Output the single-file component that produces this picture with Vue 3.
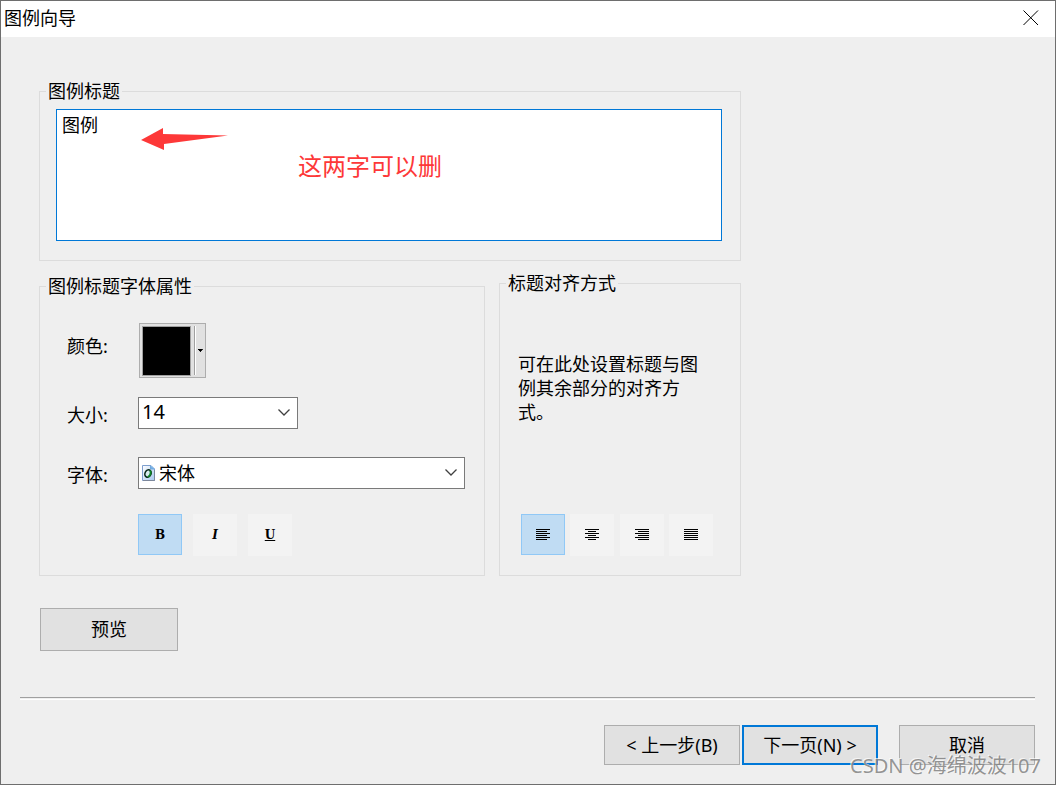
<script setup>
import { ref } from 'vue'

const title = ref('图例')
const size = ref('14')
const font = ref('宋体')
const styles = ref({ B: true, I: false, U: false })
const align = ref('left')
const styleButtons = [
  { key: 'B', label: '粗体' },
  { key: 'I', label: '斜体' },
  { key: 'U', label: '下划线' }
]
const alignments = [
  { key: 'left', label: '左对齐', d: 'M0 .5H14M0 2.5H11M0 4.5H14M0 6.5H11M0 8.5H14M0 10.5H11' },
  { key: 'center', label: '居中', d: 'M0 .5H14M3 2.5H11M0 4.5H14M3 6.5H11M0 8.5H14M3 10.5H11' },
  { key: 'right', label: '右对齐', d: 'M0 .5H14M3 2.5H14M0 4.5H14M3 6.5H14M0 8.5H14M3 10.5H14' },
  { key: 'justify', label: '两端对齐', d: 'M0 .5H14M0 2.5H14M0 4.5H14M0 6.5H14M0 8.5H14M0 10.5H14' }
]
</script>

<template>
  <main class="dialog">
    <header class="titlebar">
      <h1>图例向导</h1>
      <button class="close" type="button" aria-label="关闭">
        <svg width="16" height="16" viewBox="0 0 16 16"><path d="M.5 .5L15 15M15 .5L.5 15" /></svg>
      </button>
    </header>

    <form class="content" @submit.prevent>
      <fieldset class="group title-group">
        <legend>图例标题</legend>
        <div class="title-wrap">
          <textarea v-model="title" aria-label="图例标题" spellcheck="false"></textarea>
          <svg class="arrow" width="88" height="23" viewBox="0 0 88 23"><path d="M0 12L22 0V6L87 7.500L23 16V22Z" /></svg>
          <span class="note">这两字可以删</span>
        </div>
      </fieldset>

      <div class="columns">
        <fieldset class="group font-group">
          <legend>图例标题字体属性</legend>
          <div class="row color-row">
            <label for="color">颜色:</label>
            <button id="color" class="color" type="button">
              <span class="swatch"></span>
              <span class="split"></span>
              <svg width="5" height="3" viewBox="0 0 5 3"><path d="M0 0H5V1H4V2H3V3H2V2H1V1H0Z" /></svg>
            </button>
          </div>
          <div class="row size-row">
            <label for="size">大小:</label>
            <div class="select size">
              <select id="size" v-model="size"><option>14</option></select>
              <svg class="chevron" width="12" height="7" viewBox="0 0 12 7"><path d="M.5 .5L6 6L11.500 .5" /></svg>
            </div>
          </div>
          <div class="row font-row">
            <label for="font">字体:</label>
            <div class="select font">
              <select id="font" v-model="font"><option>宋体</option></select>
              <svg class="font-icon" width="13" height="16" viewBox="0 0 13 16">
                <defs>
                  <linearGradient id="paper" x1="0" y1="0" x2="1" y2="1">
                    <stop offset="0" stop-color="#fff" /><stop offset="1" stop-color="#a9c8ef" />
                  </linearGradient>
                </defs>
                <path d="M.5 .5H9L12.500 4V15.500H.5Z" fill="url(#paper)" stroke="#7e9fce" />
                <path d="M8.500 .5V4H12.500" fill="#72b4e8" stroke="#72a7dd" />
                <path d="M1 15.500H12.500V5" fill="none" stroke="#7c879b" />
                <ellipse cx="6" cy="8.500" rx="3" ry="3.800" transform="rotate(25 6 8.500)" fill="#d8edf0" stroke="#092a18" stroke-width="1.600" />
                <path d="M8 5.500Q9.500 7.500 7.800 10.300L6 12" fill="none" stroke="#11852a" stroke-width="1.800" />
              </svg>
              <svg class="chevron" width="12" height="7" viewBox="0 0 12 7"><path d="M.5 .5L6 6L11.500 .5" /></svg>
            </div>
          </div>
          <div class="style-tools">
            <button
              v-for="b in styleButtons" :key="b.key" type="button" class="tool"
              :class="['glyph-' + b.key, { active: styles[b.key] }]"
              :aria-label="b.label" :aria-pressed="styles[b.key]"
              @click="styles[b.key] = !styles[b.key]"
            >{{ b.key }}</button>
          </div>
        </fieldset>

        <fieldset class="group align-group">
          <legend>标题对齐方式</legend>
          <p>可在此处设置标题与图例其余部分的对齐方式。</p>
          <div class="align-tools">
            <button
              v-for="a in alignments" :key="a.key" type="button" class="tool"
              :class="{ active: align === a.key }" :aria-label="a.label"
              :aria-pressed="align === a.key" @click="align = a.key"
            >
              <svg width="14" height="11" viewBox="0 0 14 11"><path :d="a.d" /></svg>
            </button>
          </div>
        </fieldset>
      </div>

      <button class="btn preview" type="button">预览</button>
    </form>

    <footer>
      <hr />
      <div class="actions">
        <button class="btn" type="button">&lt; 上一步(B)</button>
        <button class="btn primary" type="button">下一页(N) &gt;</button>
        <button class="btn cancel" type="button">取消</button>
      </div>
    </footer>
    <span class="watermark">CSDN @海绵波波107</span>
  </main>
</template>

<style>
body { background: #efefef; }
</style>

<style scoped>
* { box-sizing: border-box; }
.dialog {
  position: relative;
  display: flex;
  flex-direction: column;
  min-height: 100vh;
  border: 1px solid #6e6e6e;
  background: #efefef;
  color: #000;
  font: 18px/24px "Noto Sans", "Noto Sans CJK SC", sans-serif;
}
button, select, textarea { font: inherit; color: inherit; margin: 0; border-radius: 0; }
.titlebar {
  display: flex;
  align-items: center;
  justify-content: space-between;
  height: 36px;
  padding: 0 16px 2px 3px;
  background: #fff;
}
h1 { margin: 0; font-size: 18px; line-height: 24px; font-weight: 400; }
.close { display: flex; padding: 0; border: 0; background: none; }
.close path { fill: none; stroke: #000; stroke-width: 1; }
.content { padding: 43px 314px 0 38px; }
.group { min-width: 0; margin: 0; border: 1px solid #dcdcdc; }
legend { padding: 0 2px; line-height: 22px; }
.title-group { padding: 7px 18px 19px 16px; }
.title-group legend { margin-left: -10px; }
.title-wrap { position: relative; }
textarea {
  display: block;
  width: 100%;
  height: 132px;
  padding: 3px 5px;
  border: 1px solid #0078d7;
  background: #fff;
  outline: 0;
  resize: none;
}
.arrow { position: absolute; left: 85px; top: 19px; fill: #fd3838; }
.note {
  position: absolute;
  left: 242px;
  top: 41px;
  font-size: 24px;
  line-height: 32px;
  color: #fd3838;
  pointer-events: none;
}
.columns {
  display: grid;
  grid-template-columns: 446fr 242fr;
  gap: 14px;
  align-items: end;
  margin-top: 11px;
}
.font-group { padding: 26px 19px 19px 27px; }
.font-group legend { margin-left: -21px; }
.row { display: grid; grid-template-columns: 71px 1fr; align-items: center; }
.row label { padding-top: 4px; }
.color-row label { padding: 0 0 10px; }
.size-row { margin-top: 19px; }
.font-row { margin-top: 28px; }
.color {
  display: flex;
  align-items: center;
  width: 67px;
  height: 55px;
  margin-left: 1px;
  padding: 2px;
  border: 1px solid #adadad;
  background: #e1e1e1;
}
.swatch { width: 51px; height: 50px; border: 1px solid #a0a0a0; background: #000; }
.split { width: 2px; height: 49px; margin: 0 2px 0 3px; border-left: 1px solid #a0a0a0; background: #fff; }
.select { position: relative; height: 32px; }
.size { width: 160px; }
.select select {
  display: block;
  width: 100%;
  height: 100%;
  padding: 0 28px 0 4px;
  border: 1px solid #7a7a7a;
  background: #fff;
  appearance: none;
  outline: 0;
}
.size select { padding: 0 28px 2px 3px; font-size: 20px; }
.font select { padding-left: 20px; }
.chevron { position: absolute; right: 8px; top: 12px; fill: none; stroke: #404040; stroke-width: 1.3; pointer-events: none; }
.font-icon { position: absolute; left: 4px; top: 8px; pointer-events: none; }
.style-tools { display: flex; gap: 11px; margin: 25px 0 0 71px; }
.tool {
  display: flex;
  align-items: center;
  justify-content: center;
  width: 44px;
  height: 42px;
  padding: 0 0 1px;
  border: 1px solid #f3f3f3;
  background: #f3f3f3;
  font: 700 12px/16px "DejaVu Serif", serif;
}
.tool.active { height: 41px; padding: 0; border-color: #90c8f6; background: #c0dcf3; }
.tool path { fill: none; stroke: #000; shape-rendering: crispEdges; }
.glyph-I { font-style: italic; }
.glyph-U { text-decoration: underline; }
.align-group { padding: 58px 27px 19px 18px; }
.align-group legend { margin-left: -12px; }
.align-group p { margin: 0; }
.align-tools { display: flex; justify-content: space-between; margin: 90px 0 0 3px; }
.btn { height: 40px; padding: 0; border: 1px solid #adadad; background: #e1e1e1; }
.preview { width: 138px; height: 43px; margin: 32px 0 0 1px; padding-bottom: 2px; }
footer { margin-top: auto; padding: 24px 20px 19px 19px; }
hr { height: 3px; margin: 0; border: 0; border-top: 1px solid #a0a0a0; border-bottom: 1px solid #fff; }
.actions { display: flex; justify-content: flex-end; gap: 2px; margin-top: 25px; }
.actions .btn { width: 136px; }
.actions .primary { border: 2px solid #0078d7; }
.cancel { margin-left: 19px; }
.watermark {
  position: absolute;
  right: 14px;
  bottom: 4px;
  font-size: 20px;
  line-height: 28px;
  color: rgba(130, 130, 130, 0.85);
  text-shadow: -1px -1px 0 rgba(255, 255, 255, 0.7);
  pointer-events: none;
}
</style>
